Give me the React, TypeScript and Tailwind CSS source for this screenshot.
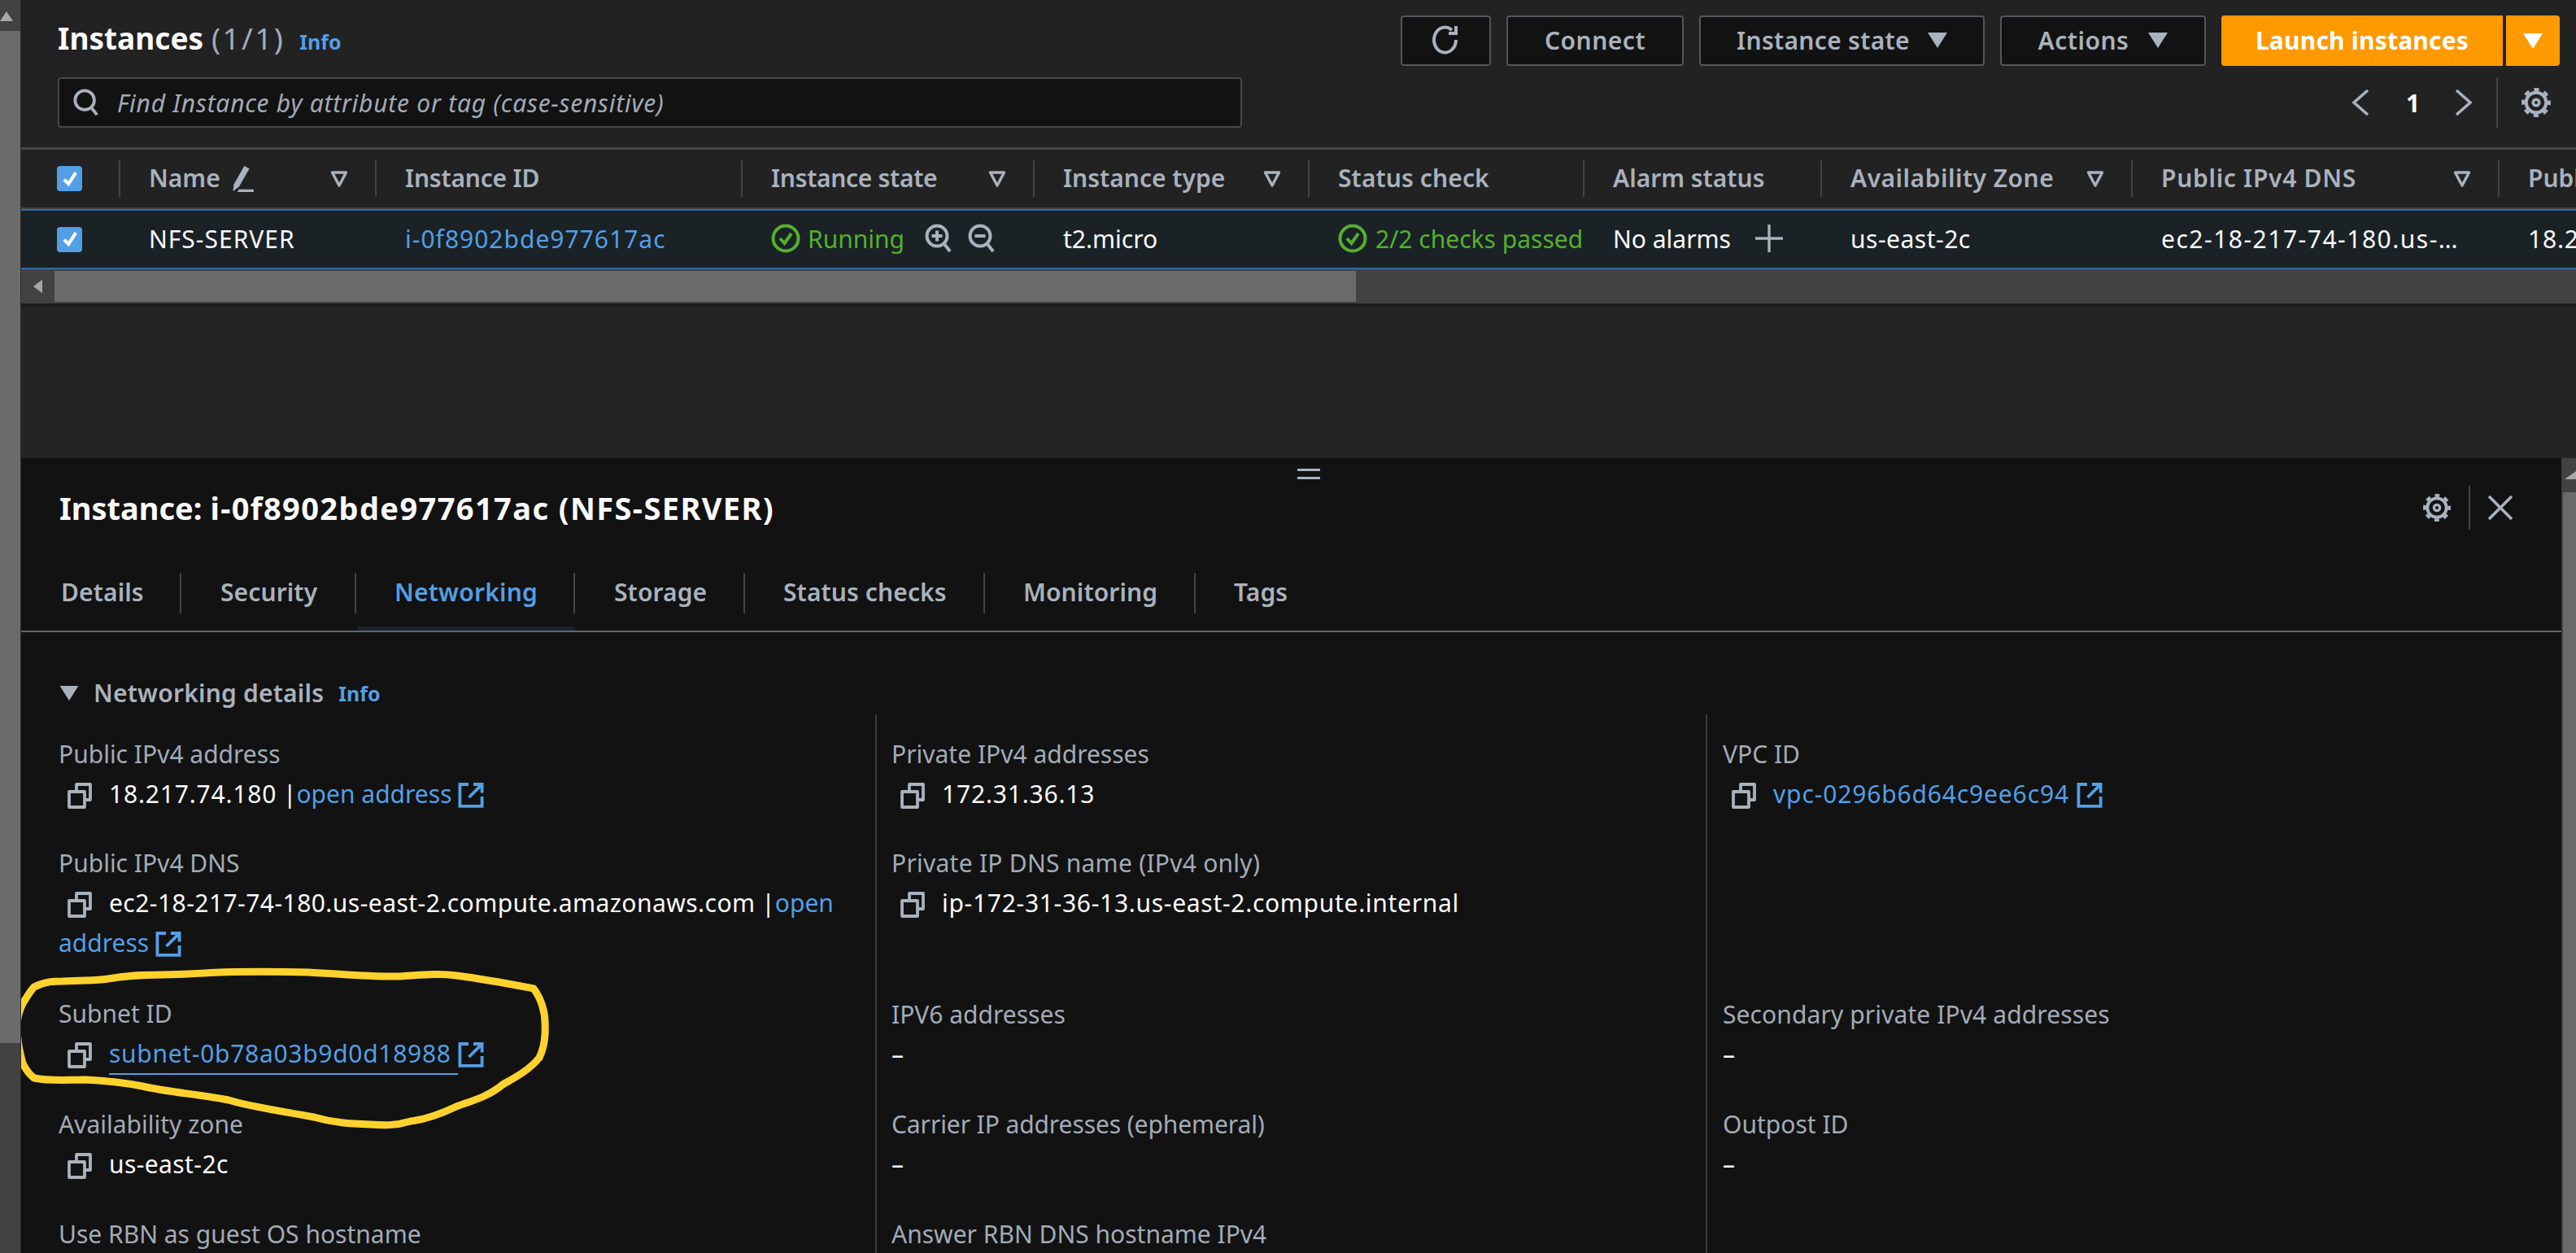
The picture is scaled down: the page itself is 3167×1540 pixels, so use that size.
import React from "react";

const Copy = () => (
  <svg viewBox="0 0 30 32" className="inline-block w-[30px] h-[32px] align-[-7px] text-[#a9b2bd]" fill="none" stroke="currentColor" strokeWidth="3.8" strokeLinejoin="round">
    <path d="M2 11h19v19H2z" />
    <path d="M11 11V2h17v19h-7" />
  </svg>
);
const Ext = () => (
  <svg viewBox="0 0 16 16" className="inline-block w-[32px] h-[32px] align-[-6px] text-[#539fe5]" fill="none" stroke="currentColor" strokeWidth="1.9">
    <path d="M6.5 1.5H1.2v13.4h13.6V9" />
    <path d="M9.5 1.5h5.3v5.2M14.5 1.8 6.8 9.5" />
  </svg>
);
const Gear = ({ c = "w-[38px] h-[38px]" }: { c?: string }) => (
  <svg viewBox="0 0 16 16" className={c + " text-[#a9b2bd]"} fill="none" stroke="currentColor">
    <circle cx="8" cy="8" r="5.2" strokeWidth="1.7" />
    <circle cx="8" cy="8" r="6.7" strokeWidth="1.7" strokeDasharray="2.6 2.66" strokeDashoffset="1.3" />
    <circle cx="8" cy="8" r="1.6" strokeWidth="1.5" />
  </svg>
);
const Sort = () => (
  <svg viewBox="0 0 22 20" className="w-[22px] h-[20px] text-[#a9b2bd]" fill="none" stroke="currentColor" strokeWidth="3.4" strokeLinejoin="round">
    <path d="M2.5 2h17L11 18z" />
  </svg>
);
const Down = ({ color = "text-[#a9b2bd]" }: { color?: string }) => (
  <svg viewBox="0 0 24 20" className={"w-[24px] h-[20px] " + color} fill="currentColor">
    <path d="M0 1h24L12 20z" />
  </svg>
);
const Check = () => (
  <span className="flex items-center justify-center w-[31px] h-[31px] rounded-[4px] bg-[#539fe5]">
    <svg viewBox="0 0 20 20" className="w-[24px] h-[24px]" fill="none" stroke="#fff" strokeWidth="3.4">
      <path d="M4 10.5 8.5 15 16 3.5" />
    </svg>
  </span>
);
const OkIcon = () => (
  <svg viewBox="0 0 36 36" className="w-[36px] h-[36px] shrink-0 text-[#55b02d]" fill="none" stroke="currentColor">
    <circle cx="18" cy="18" r="15.5" strokeWidth="4" />
    <path d="M11 18l5.5 6L25 12" strokeWidth="4" />
  </svg>
);
const Zoom = ({ plus }: { plus?: boolean }) => (
  <svg viewBox="0 0 34 36" className="w-[34px] h-[36px] text-[#a9b2bd]" fill="none" stroke="currentColor" strokeWidth="4">
    <circle cx="15" cy="15" r="12.5" />
    <path d="M24 25l7 9" />
    <path d={plus ? "M8.5 15h13M15 8.5v13" : "M8.5 15h13"} />
  </svg>
);

function HeadCell({ w, label, sort, first, t = "", children }: { w: string; label?: string; sort?: boolean; first?: boolean; t?: string; children?: React.ReactNode }) {
  return (
    <div className={w + " shrink-0 h-full flex items-center relative"}>
      {!first && <span className="w-[2px] h-[45px] bg-[#444448] shrink-0" />}
      {label && <span className={"ml-[35px] pb-[2px] font-semibold text-[#a9b2bd] whitespace-nowrap " + t}>{label}</span>}
      {children}
      {sort && (
        <span className="ml-auto mr-[33px]">
          <Sort />
        </span>
      )}
    </div>
  );
}
function BodyCell({ w, children }: { w: string; children: React.ReactNode }) {
  return <div className={w + " shrink-0 h-full flex items-center pl-[37px] pb-[2px] overflow-hidden whitespace-nowrap"}>{children}</div>;
}

function Btn({ w, children }: { w: string; children: React.ReactNode }) {
  return (
    <div className={w + " h-[62px] pb-[2px] rounded-[4px] border-2 border-[#55565b] bg-[#121212] flex items-center justify-center font-semibold text-[#a9b2bd]"}>
      {children}
    </div>
  );
}

function Field({ label, h, t = "", children }: { label: string; h: string; t?: string; children?: React.ReactNode }) {
  return (
    <div className={h}>
      <div className={"text-[#a2abb7] leading-[44px] whitespace-nowrap " + t}>{label}</div>
      <div className="text-[#fbfbfb] mt-[2px] leading-[49px]">{children}</div>
    </div>
  );
}
const Val = ({ children }: { children: React.ReactNode }) => (
  <>
    <span className="ml-[11px] mr-[21px]">
      <Copy />
    </span>
    {children}
  </>
);
const Link = ({ children }: { children: React.ReactNode }) => <span className="text-[#539fe5]">{children}</span>;
const Dash = () => <span>–</span>;

export default function App() {
  return (
    <div className="w-[3167px] h-[1540px] overflow-hidden flex bg-[#121212] text-[30px] text-[#fbfbfb] font-['Noto_Sans',sans-serif]">
      {/* page scrollbar */}
      <div className="w-[26px] h-full shrink-0 flex flex-col bg-[#424242] border-r border-[#2a2a2a]">
        <div className="h-[38px] flex items-start pt-[14px] bg-[#424242]">
          <svg viewBox="0 0 16 12" className="w-[16px] h-[12px]" fill="#a8a8a8">
            <path d="M0 12 8 0l8 12z" />
          </svg>
        </div>
        <div className="h-[1244px] bg-[#6b6b6b]" />
      </div>

      <div className="flex-1 min-w-0 flex flex-col">
        {/* list pane */}
        <div className="h-[563px] shrink-0 bg-[#242424] overflow-hidden">
          <div className="h-[181px] bg-[#222222] pl-[45px] pr-[20px] pt-[19px]">
            <div className="h-[62px] flex items-center justify-between">
              <div className="flex items-baseline pb-[6px]">
                <span className="text-[37px] font-bold text-[#fbfbfb]">Instances</span>
                <span className="text-[37px] text-[#a2abb7] ml-[10px] tracking-[2.4px]">(1/1)</span>
                <span className="text-[25px] font-bold text-[#539fe5] ml-[18px]">Info</span>
              </div>
              <div className="flex items-center gap-[19px]">
                <Btn w="w-[111px]">
                  <svg viewBox="0 0 40 40" className="w-[40px] h-[40px] text-[#a9b2bd]" fill="none" stroke="currentColor" strokeWidth="4">
                    <path d="M32 20a13.5 15.5 0 1 1-5-12" />
                    <path d="M32 3v9H23" />
                  </svg>
                </Btn>
                <Btn w="w-[218px]">
                  <span className="tracking-[0.5px]">Connect</span>
                </Btn>
                <Btn w="w-[351px]">
                  <span className="tracking-[0.3px]">Instance state</span>
                  <span className="ml-[22px]">
                    <Down />
                  </span>
                </Btn>
                <Btn w="w-[253px]">
                  <span className="tracking-[0.5px]">Actions</span>
                  <span className="ml-[24px]">
                    <Down />
                  </span>
                </Btn>
                <div className="flex h-[62px] gap-[4px]">
                  <div className="w-[346px] pb-[2px] rounded-l-[4px] bg-[#ff9900] flex items-center justify-center font-bold text-white tracking-[0.2px]">Launch instances</div>
                  <div className="w-[66px] rounded-r-[4px] bg-[#ff9900] flex items-center justify-center">
                    <Down color="text-white" />
                  </div>
                </div>
              </div>
            </div>
            <div className="mt-[14px] h-[62px] flex items-center justify-between">
              <div className="w-[1456px] h-[62px] rounded-[4px] border-2 border-[#47474b] bg-[#121212] flex items-center pl-[16px]">
                <svg viewBox="0 0 34 36" className="w-[34px] h-[34px] text-[#a9b2bd]" fill="none" stroke="currentColor" strokeWidth="4">
                  <circle cx="15" cy="15" r="12.5" />
                  <path d="M24 25l7 9" />
                </svg>
                <span className="ml-[21px] italic text-[30px] tracking-[0.75px] text-[#a2abb7] whitespace-nowrap">Find Instance by attribute or tag (case-sensitive)</span>
              </div>
              <div className="flex items-center h-[62px] pr-[10px]">
                <svg viewBox="0 0 22 32" className="w-[22px] h-[32px] text-[#a9b2bd]" fill="none" stroke="currentColor" strokeWidth="3.5">
                  <path d="M20 1 3 16l17 15" />
                </svg>
                <span className="ml-[45px] w-[19px] font-bold text-[#fbfbfb]">1</span>
                <svg viewBox="0 0 22 32" className="ml-[41px] w-[22px] h-[32px] text-[#a9b2bd]" fill="none" stroke="currentColor" strokeWidth="3.5">
                  <path d="M2 1l17 15L2 31" />
                </svg>
                <span className="ml-[29px] w-[2px] h-[62px] bg-[#444448]" />
                <span className="ml-[28px]">
                  <Gear />
                </span>
              </div>
            </div>
          </div>

          {/* table */}
          <div className="h-[76px] flex items-center bg-[#222222] border-t-[3px] border-[#444444] border-b-2 overflow-hidden">
            <HeadCell w="w-[120px]" first>
              <span className="ml-[44px]">
                <Check />
              </span>
            </HeadCell>
            <HeadCell w="w-[315px]" sort>
              <span className="ml-[35px] pb-[2px] font-semibold text-[#a9b2bd]">Name</span>
              <svg viewBox="0 0 32 32" className="ml-[8px] w-[34px] h-[34px] text-[#a9b2bd]" fill="currentColor">
                <path d="M20 1l6 3-12 21-7 5 1-8z" />
                <path d="M14 28h17v3H12z" />
              </svg>
            </HeadCell>
            <HeadCell w="w-[450px]" label="Instance ID" t="tracking-[-0.2px]" />
            <HeadCell w="w-[359px]" label="Instance state" sort t="tracking-[-0.3px]" />
            <HeadCell w="w-[338px]" label="Instance type" sort />
            <HeadCell w="w-[338px]" label="Status check" t="tracking-[0.1px]" />
            <HeadCell w="w-[292px]" label="Alarm status" />
            <HeadCell w="w-[382px]" label="Availability Zone" sort t="tracking-[0.5px]" />
            <HeadCell w="w-[451px]" label="Public IPv4 DNS" sort t="tracking-[0.7px]" />
            <HeadCell w="w-[200px]" label="Public IPv4 address" />
          </div>
          <div className="h-[74px] flex items-center bg-[#1a2226] border-y-2 border-[#33689e] overflow-hidden">
            <div className="w-[120px] shrink-0 pl-[44px]">
              <Check />
            </div>
            <BodyCell w="w-[315px]">
              <span className="tracking-[1px]">NFS-SERVER</span>
            </BodyCell>
            <BodyCell w="w-[450px]">
              <span className="text-[#539fe5] tracking-[1px]">i-0f8902bde977617ac</span>
            </BodyCell>
            <BodyCell w="w-[359px]">
              <OkIcon />
              <span className="ml-[9px] text-[#55b02d]">Running</span>
              <span className="ml-[25px]">
                <Zoom plus />
              </span>
              <span className="ml-[19px]">
                <Zoom />
              </span>
            </BodyCell>
            <BodyCell w="w-[338px]">t2.micro</BodyCell>
            <BodyCell w="w-[338px]">
              <OkIcon />
              <span className="ml-[10px] text-[#55b02d]">2/2 checks passed</span>
            </BodyCell>
            <BodyCell w="w-[292px]">
              No alarms
              <svg viewBox="0 0 34 34" className="ml-[30px] w-[34px] h-[34px] shrink-0 text-[#a9b2bd]" stroke="currentColor" strokeWidth="3.4">
                <path d="M0 17h34M17 0v34" />
              </svg>
            </BodyCell>
            <BodyCell w="w-[382px]">
              <span className="tracking-[0.5px]">us-east-2c</span>
            </BodyCell>
            <BodyCell w="w-[451px]">
              <span className="tracking-[1.5px]">ec2-18-217-74-180.us-…</span>
            </BodyCell>
            <BodyCell w="w-[200px]">
              <span className="tracking-[0.8px]">18.217.74.180</span>
            </BodyCell>
          </div>
          {/* horizontal scrollbar */}
          <div className="h-[42px] bg-[#424242] flex items-center shadow-[0_3px_3px_rgba(0,0,0,0.3)]">
            <div className="w-[41px] flex justify-center">
              <svg viewBox="0 0 12 18" className="w-[11px] h-[18px]" fill="#a8a8a8">
                <path d="M12 0 0 9l12 9z" />
              </svg>
            </div>
            <div className="w-[1600px] h-[38px] bg-[#6b6b6b]" />
          </div>
        </div>

        {/* detail pane */}
        <div className="flex-1 min-h-0 flex bg-[#121212] relative">
          <div className="flex-1 min-w-0">
            <svg viewBox="0 0 28 14" className="absolute left-[1569px] top-[13px] w-[28px] h-[14px]" fill="#a9b2bd">
              <path d="M0 0h28v3H0zM0 10h28v3H0z" />
            </svg>
            <div className="h-[122px] pl-[47px] pr-[60px] flex items-center justify-between">
              <span className="text-[38px] font-bold text-[#fbfbfb] whitespace-nowrap">
                Instance: <span className="tracking-[1.4px]">i-0f8902bde977617ac (NFS-SERVER)</span>
              </span>
              <div className="flex items-center">
                <Gear c="w-[36px] h-[36px]" />
                <span className="ml-[21px] w-[2px] h-[54px] bg-[#444448]" />
                <svg viewBox="0 0 30 30" className="ml-[22px] w-[30px] h-[30px] text-[#a9b2bd]" stroke="currentColor" strokeWidth="3.6">
                  <path d="M1 1l28 28M29 1 1 29" />
                </svg>
              </div>
            </div>
            <div className="h-[92px] border-b-2 border-[#5f6670] flex font-semibold text-[#a9b2bd]">
              {[
                ["Details", "w-[197px] pl-[49px]", false],
                ["Security", "w-[215px] pl-[48px]", false],
                ["Networking", "w-[269px] pl-[47px]", true],
                ["Storage", "w-[209px] pl-[48px]", false],
                ["Status checks", "w-[295px] pl-[47px]", false],
                ["Monitoring", "w-[259px] pl-[47px]", false],
                ["Tags", "w-[150px] pl-[47px]", false],
              ].map(([t, w, active], i, arr) => (
                <div key={String(t)} className={String(w) + " h-[50px] mt-[19px] pb-[4px] flex items-center relative"}>
                  <span className={active ? "text-[#539fe5] tracking-[0.2px]" : "tracking-[0.1px]"}>{t}</span>
                  {i < arr.length - 1 && <span className="absolute right-0 top-0 w-[2px] h-[50px] bg-[#444448]" />}
                  {active && <span className="absolute left-[2px] right-0 -bottom-[21px] h-[5px] bg-[#1a222c]" />}
                </div>
              ))}
            </div>
            <div className="pl-[47px] pt-[47px] h-[54px] box-content flex items-center">
              <svg viewBox="0 0 24 20" className="w-[24px] h-[19px] text-[#a9b2bd]" fill="currentColor">
                <path d="M0 1h24L12 20z" />
              </svg>
              <span className="ml-[18px] font-semibold text-[#a9b2bd] tracking-[0.2px]">Networking details</span>
              <span className="ml-[18px] text-[25px] font-bold text-[#539fe5] translate-y-[2px]">Info</span>
            </div>
            <div className="flex">
              <div className="w-[1050px] shrink-0 pl-[46px] pr-[20px] pt-[27px] h-[700px]">
                <Field label="Public IPv4 address" h="h-[134px]">
                  <Val>
                    <span className="tracking-[0.8px]">18.217.74.180</span> |<Link>open address </Link>
                    <Ext />
                  </Val>
                </Field>
                <Field label="Public IPv4 DNS" h="h-[185px]">
                  <Val>
                    <span className="tracking-[0.45px]">ec2-18-217-74-180.us-east-2.compute.amazonaws.com</span> |<Link>open address </Link>
                    <Ext />
                  </Val>
                </Field>
                <Field label="Subnet ID" h="h-[136px]">
                  <Val>
                    <span className="text-[#539fe5] border-b-2 border-[#539fe5] pb-[4px] tracking-[0.7px]">subnet-0b78a03b9d0d18988&nbsp;</span>
                    <Ext />
                  </Val>
                </Field>
                <Field label="Availability zone" h="h-[135px]">
                  <Val>
                    <span className="tracking-[0.4px]">us-east-2c</span>
                  </Val>
                </Field>
                <Field label="Use RBN as guest OS hostname" h="h-[100px]" />
              </div>
              <div className="w-[1021px] shrink-0 border-l-2 border-[#3c3c3f] pl-[18px] pt-[27px] h-[700px]">
                <Field label="Private IPv4 addresses" h="h-[134px]">
                  <Val>
                    <span className="tracking-[0.8px]">172.31.36.13</span>
                  </Val>
                </Field>
                <Field label="Private IP DNS name (IPv4 only)" h="h-[186px]" t="tracking-[0.25px]">
                  <Val>
                    <span className="tracking-[0.7px]">ip-172-31-36-13.us-east-2.compute.internal</span>
                  </Val>
                </Field>
                <Field label="IPV6 addresses" h="h-[135px]">
                  <Dash />
                </Field>
                <Field label="Carrier IP addresses (ephemeral)" h="h-[135px]" t="tracking-[-0.1px]">
                  <Dash />
                </Field>
                <Field label="Answer RBN DNS hostname IPv4" h="h-[100px]" />
              </div>
              <div className="flex-1 border-l-2 border-[#3c3c3f] pl-[19px] pt-[27px] h-[700px]">
                <Field label="VPC ID" h="h-[320px]">
                  <Val>
                    <span className="text-[#539fe5] tracking-[0.85px]">vpc-0296b6d64c9ee6c94 </span>
                    <Ext />
                  </Val>
                </Field>
                <Field label="Secondary private IPv4 addresses" h="h-[135px]" t="tracking-[0.1px]">
                  <Dash />
                </Field>
                <Field label="Outpost ID" h="h-[135px]">
                  <Dash />
                </Field>
              </div>
            </div>
          </div>
          {/* right scrollbar */}
          <div className="w-[18px] shrink-0 bg-[#424242] flex flex-col">
            <div className="h-[42px] flex items-center justify-end">
              <svg viewBox="0 0 14 10" className="w-[14px] h-[10px]" fill="#a8a8a8">
                <path d="M0 10 14 0v10z" />
              </svg>
            </div>
            <div className="flex-1 ml-[2px] bg-[#6b6b6b]" />
          </div>

          {/* hand-drawn annotation */}
          <svg className="absolute left-0 top-0 w-[800px] h-[977px] pointer-events-none" viewBox="26 563 800 977" fill="none">
            <path
              d="M42 1213 C55 1206 68 1206 77 1206 C105 1204 115 1206 133 1203 C170 1196 200 1199 232 1197 C290 1193 340 1194 379 1195 C420 1197 455 1201 491 1200 C520 1198 540 1196 561 1199 C600 1204 635 1211 656 1215 C666 1228 670 1245 670 1257 C671 1275 668 1290 663 1300 C650 1316 632 1325 618 1333 C600 1348 580 1353 561 1360 C540 1370 522 1376 505 1378 C485 1384 470 1383 456 1382 C430 1381 410 1380 386 1373 C350 1366 310 1361 281 1352 C245 1345 205 1342 175 1335 C150 1330 125 1328 105 1327 C85 1327 60 1329 42 1325 C35 1320 32 1315 28 1307 C23 1290 21 1275 21 1260 C22 1245 26 1235 32 1227 C35 1222 38 1217 42 1213 Z"
              stroke="#fdd22d"
              strokeWidth="9"
              strokeLinejoin="round"
            />
          </svg>
        </div>
      </div>
    </div>
  );
}
